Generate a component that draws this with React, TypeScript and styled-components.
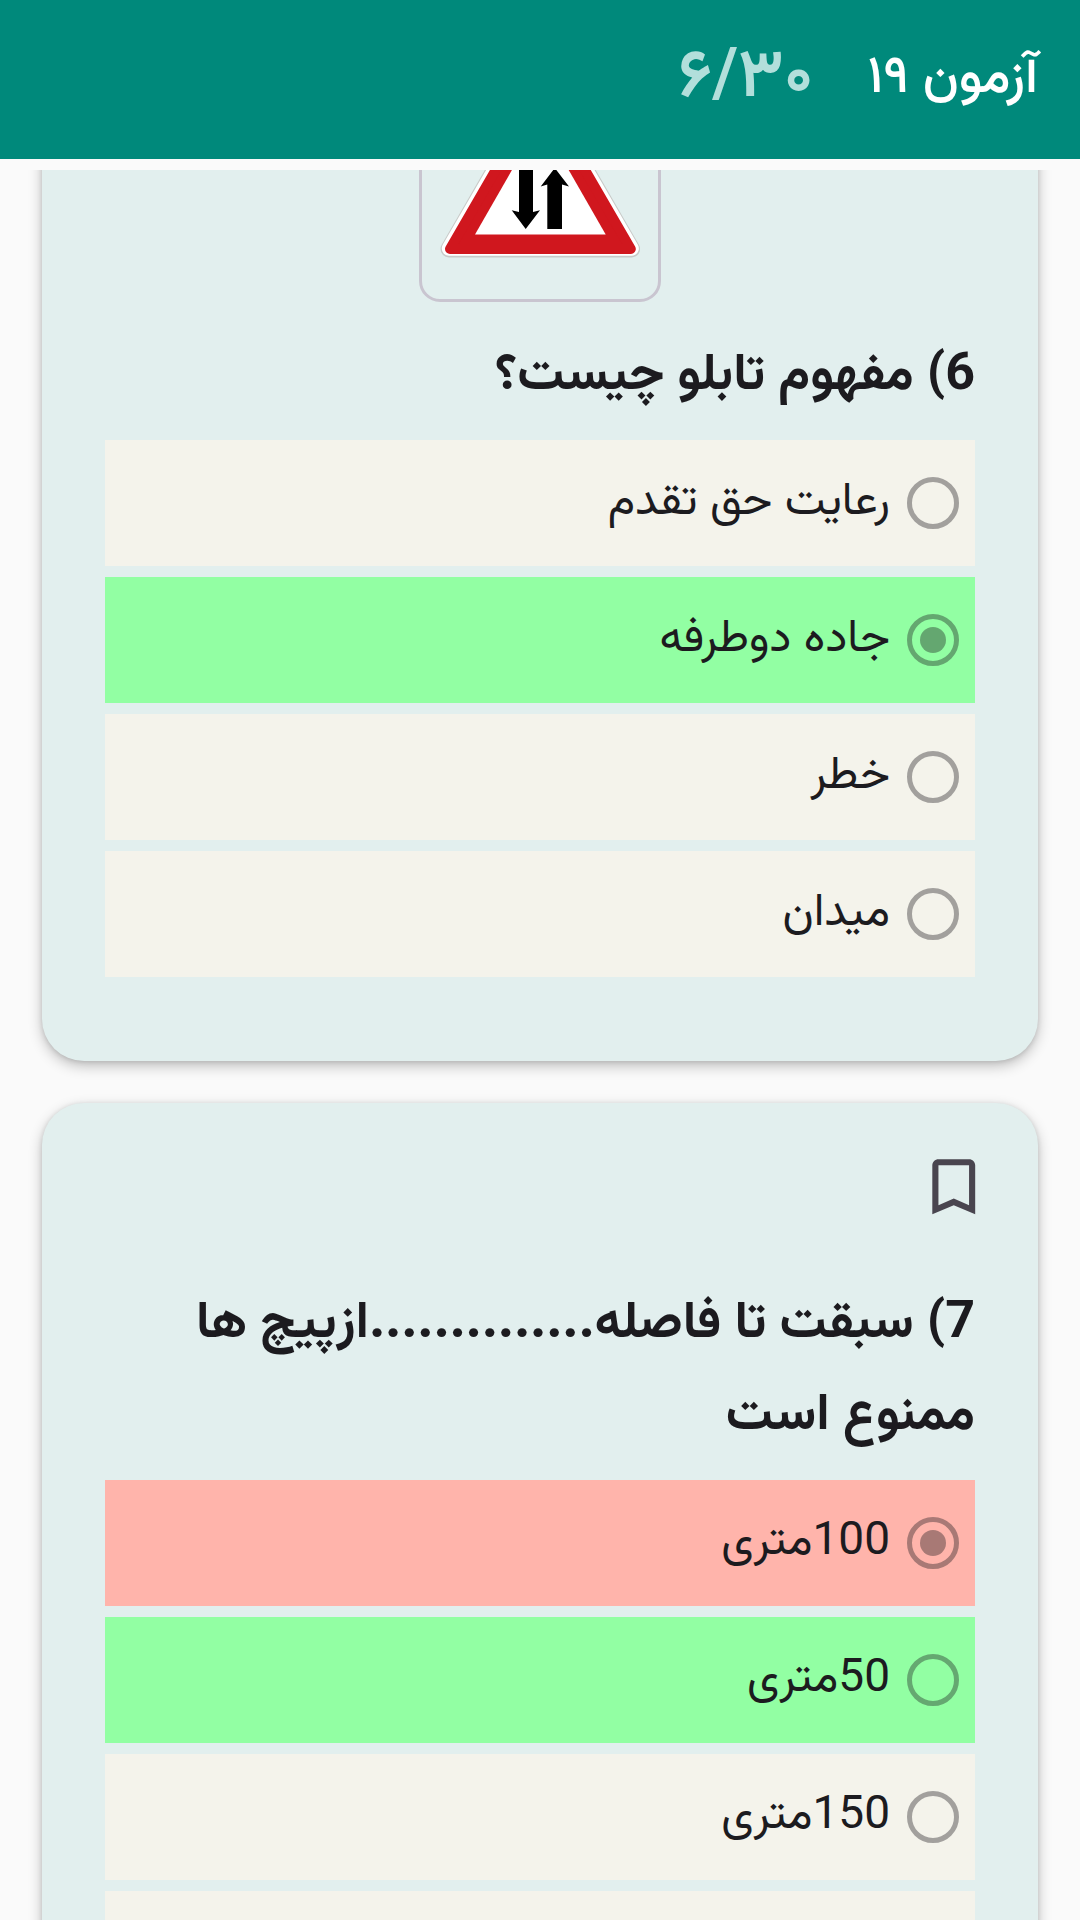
import React from 'react';
import styled, { createGlobalStyle } from 'styled-components';

const GlobalStyle = createGlobalStyle`
  * { box-sizing: border-box; }
  body { margin: 0; background: #fafafa; }
`;

const Screen = styled.div`
  direction: rtl;
  width: 1080px;
  height: 1920px;
  display: flex;
  flex-direction: column;
  overflow: hidden;
  background: #fafafa;
  color: #1c1b1f;
  font-family: Vazirmatn, 'Noto Sans Arabic', 'DejaVu Sans', sans-serif;
`;

const Header = styled.header`
  flex: none;
  height: 159px;
  margin-bottom: 11px;
  padding: 0 42px;
  display: flex;
  align-items: flex-start;
  gap: 54px;
  background: #00897b;
  white-space: nowrap;
`;

const Title = styled.h1`
  margin: 38px 0 0;
  font-size: 52.5px;
  line-height: 82px;
  font-weight: 500;
  color: #fff;
`;

const Counter = styled.span`
  margin-top: 31px;
  font-size: 68px;
  line-height: 98px;
  font-weight: 600;
  color: #b2dfdb;
`;

const List = styled.main`
  flex: 1;
  min-height: 0;
  overflow: hidden;
`;

const Cards = styled.div`
  display: flex;
  flex-direction: column;
  gap: 42px;
  padding: 0 42px;
  margin-top: -271px;
`;

const Card = styled.section`
  display: flex;
  flex-direction: column;
  padding: 47px 63px 84px;
  border-radius: 42px;
  background: #e2efee;
  box-shadow: 0 5px 14px rgba(0, 0, 0, 0.24), 0 1px 5px rgba(0, 0, 0, 0.12);
`;

const BookmarkButton = styled.button`
  align-self: flex-start;
  width: 73.5px;
  height: 73.5px;
  margin: 0 -15.5px 0 0;
  padding: 0;
  border: 0;
  background: none;
  svg { display: block; width: 100%; height: 100%; }
`;

const Frame = styled.div`
  align-self: center;
  width: 242px;
  height: 242px;
  margin-top: 40px;
  padding-top: 20px;
  display: flex;
  justify-content: center;
  border: 3px solid #c9c5d0;
  border-radius: 21px;
  svg { display: block; width: 200px; height: 176px; }
`;

const Question = styled.h2<{ $gap: number }>`
  margin: ${(p) => p.$gap}px 0 0;
  padding-bottom: 17px;
  font-size: 52px;
  line-height: 92px;
  font-weight: 700;
`;

const Blank = styled.span`
  display: inline-block;
  font-size: 54px;
  line-height: 60px;
`;

const Options = styled.div`
  display: flex;
  flex-direction: column;
  gap: 11px;
`;

type Tone = 'plain' | 'right' | 'wrong';
const tones: Record<Tone, string> = { plain: '#f4f3eb', right: '#92ffa3', wrong: '#ffb4ab' };

const Option = styled.label<{ $tone: Tone }>`
  display: flex;
  align-items: center;
  gap: 17px;
  height: 126px;
  padding-right: 16px;
  background: ${(p) => tones[p.$tone]};
`;

const Radio = styled.span<{ $checked?: boolean }>`
  flex: none;
  width: 52px;
  height: 52px;
  display: flex;
  align-items: center;
  justify-content: center;
  border: 5px solid #1c1b1f;
  border-radius: 50%;
  opacity: 0.38;
  &::after {
    content: '';
    display: ${(p) => (p.$checked ? 'block' : 'none')};
    width: 26px;
    height: 26px;
    border-radius: 50%;
    background: #1c1b1f;
  }
`;

const Label = styled.span`
  font-size: 46px;
  line-height: 72px;
`;

const Bookmark = () => (
  <BookmarkButton aria-label="bookmark">
    <svg viewBox="0 0 24 24" fill="#49454f">
      <path d="M17 3H7c-1.1 0-2 .9-2 2v16l7-3 7 3V5c0-1.1-.9-2-2-2zm0 15l-5-2.18L7 18V5h10v13z" />
    </svg>
  </BookmarkButton>
);

const TwoWaySign = () => (
  <svg viewBox="440 83 200 176">
    <path d="M449 249 L540.3 91 L631.6 249 Z" fill="#c8cac8" stroke="#c8cac8" strokeWidth="17" strokeLinejoin="round" />
    <path d="M449 248.5 L540.3 91 L631.6 248.5 Z" fill="#fff" stroke="#fff" strokeWidth="14.5" strokeLinejoin="round" />
    <path d="M450 249 L540.3 93 L630.8 249 Z" fill="#d0171e" stroke="#d0171e" strokeWidth="10" strokeLinejoin="round" />
    <path d="M475 234.5 L540.3 120.5 L605.7 234.5 Z" fill="#fff" />
    <path d="M519 150 H533 V212 L540 210.3 L525.7 229 L511.7 210.3 L519 212 Z" />
    <path d="M547.3 229 V184.5 L540.7 186.5 L554.8 168 L569 186.5 L562 184.5 V229 Z" />
  </svg>
);

interface Choice { text: string; tone?: Tone; checked?: boolean }

const Choices = ({ items }: { items: Choice[] }) => (
  <Options>
    {items.map((o) => (
      <Option key={o.text} $tone={o.tone ?? 'plain'}>
        <Radio $checked={o.checked} />
        <Label>{o.text}</Label>
      </Option>
    ))}
  </Options>
);

export default function App() {
  return (
    <>
      <GlobalStyle />
      <Screen>
        <Header>
          <Title>آزمون ۱۹</Title>
          <Counter>۶/۳۰</Counter>
        </Header>
        <List>
          <Cards>
            <Card>
              <Bookmark />
              <Frame><TwoWaySign /></Frame>
              <Question $gap={29}>6) مفهوم تابلو چیست؟</Question>
              <Choices
                items={[
                  { text: 'رعایت حق تقدم' },
                  { text: 'جاده دوطرفه', tone: 'right', checked: true },
                  { text: 'خطر' },
                  { text: 'میدان' },
                ]}
              />
            </Card>
            <Card>
              <Bookmark />
              <Question $gap={56}>
                7) سبقت تا فاصله<Blank>..............</Blank>ازپیچ ها ممنوع است
              </Question>
              <Choices
                items={[
                  { text: '100متری', tone: 'wrong', checked: true },
                  { text: '50متری', tone: 'right' },
                  { text: '150متری' },
                  { text: '' },
                ]}
              />
            </Card>
          </Cards>
        </List>
      </Screen>
    </>
  );
}
